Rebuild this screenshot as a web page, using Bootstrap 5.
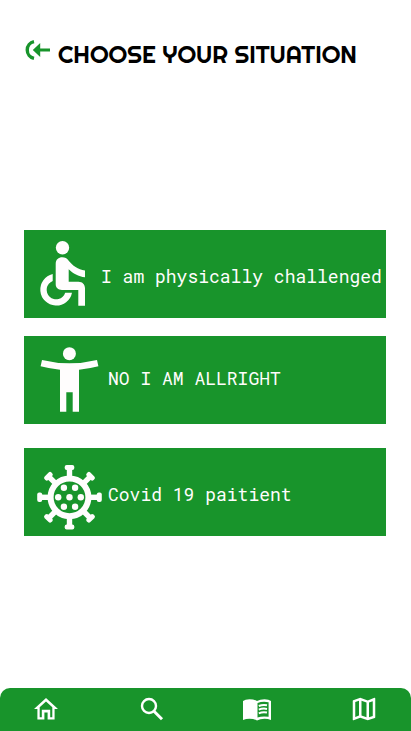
<!DOCTYPE html>
<html lang="en">
<head>
<meta charset="utf-8">
<meta name="viewport" content="width=device-width, initial-scale=1">
<title>Choose your situation</title>
<link href="https://cdn.jsdelivr.net/npm/bootstrap@5.3.0/dist/css/bootstrap.min.css" rel="stylesheet">
<style>
  :root { --brand: #18942b; }
  .back-link { color: var(--brand); margin-bottom: 8px; }
  .page-title { font-family: "Righteous", Lato, sans-serif; font-size: 24px; line-height: 32px; font-weight: 400; }
  .page-head { padding-top: 38px; }
  .choices { padding: 160px 25px 24px 24px; }
  .choice { --bs-btn-color: #fffdfd; --bs-btn-bg: var(--brand); --bs-btn-hover-color: #fff; --bs-btn-hover-bg: #127a22; --bs-btn-active-color: #fff; --bs-btn-active-bg: #106c1e;
    font-family: "Roboto Mono", "Liberation Mono", monospace; font-size: 18px; font-weight: 400; line-height: 24px; min-height: 88px; }
  .choice svg { fill: #fffdfd; }
  .choice-gap { margin-top: 18px; }
  .tabs { background: var(--brand); border-radius: 10px 10px 0 0; height: 43px; padding: 0 32px 2px; }
</style>
<script src="https://cdn.jsdelivr.net/npm/bootstrap@5.3.0/dist/js/bootstrap.bundle.min.js"></script>
</head>
<body class="bg-white">
<div class="d-flex flex-column min-vh-100">
  <header class="page-head d-flex align-items-center px-4 gap-2">
    <a href="#" class="back-link d-flex" aria-label="Back">
      <svg width="26" height="22" viewBox="0 0 26 22"><path d="M10.8 2.600A8.600 8.600 0 0 0 10.8 19.400" fill="none" stroke="currentColor" stroke-width="3.4" transform="translate(-.8 0)"/><path d="M8.800 11l7.400-7v5.500h9.800v3H16.200v5.500z" fill="currentColor"/></svg>
    </a>
    <h1 class="page-title text-black text-nowrap mb-0">CHOOSE YOUR SITUATION</h1>
  </header>

  <main class="choices d-flex flex-column">
    <button type="button" class="choice btn rounded-0 border-0 p-0 d-flex align-items-center text-start text-nowrap">
      <svg class="flex-shrink-0" width="77" height="88" viewBox="0 0 77 88" aria-hidden="true">
        <circle cx="38.5" cy="17.7" r="6.7"/>
        <path d="M31.7 34C31.7 29.5 34.5 27.3 38.3 27.3C41 27.3 43 28.5 44.5 30.5C48.5 35.5 54 39.8 61 40.5V47.3C54.5 46.6 49 43.5 44.7 39.3V51.7H54.5C58.5 51.7 61 54.5 61 58.3V75.7H54.3V60H38C34 60 31.7 57.5 31.7 54.3Z"/>
        <path d="M28.7 44V51A9.5 9.5 0 1 0 41.2 62.7H48A16 16 0 1 1 28.7 44Z"/>
      </svg>
      <span class="pt-1">I am physically challenged</span>
    </button>
    <button type="button" class="choice choice-gap btn rounded-0 border-0 p-0 d-flex align-items-center text-start text-nowrap">
      <svg class="flex-shrink-0" width="84" height="88" viewBox="0 0 84 88" aria-hidden="true">
        <circle cx="45.4" cy="17.7" r="6.5"/>
        <path d="M18 24Q45.4 30.7 73 24L74.4 30.3Q65 32.8 55 33.7V75.7H48.7V56.3H42.3V75.7H36V33.7Q26 32.8 16.6 30.3Z"/>
      </svg>
      <span class="pb-1">NO I AM ALLRIGHT</span>
    </button>
    <button type="button" class="choice btn rounded-0 border-0 p-0 mt-4 d-flex align-items-center text-start text-nowrap">
      <svg class="flex-shrink-0" width="84" height="88" viewBox="0 0 84 88" aria-hidden="true">
        <defs>
          <g id="spike"><rect x="-2.700" y="-29" width="5.400" height="10"/><rect x="-4.800" y="-32.300" width="9.600" height="5" rx="2"/></g>
        </defs>
        <g transform="translate(45.5 49.3)">
          <circle r="18.9" fill="none" stroke="#fffdfd" stroke-width="6"/>
          <use href="#spike"/><use href="#spike" transform="rotate(45)"/><use href="#spike" transform="rotate(90)"/><use href="#spike" transform="rotate(135)"/>
          <use href="#spike" transform="rotate(180)"/><use href="#spike" transform="rotate(225)"/><use href="#spike" transform="rotate(270)"/><use href="#spike" transform="rotate(315)"/>
          <circle r="3.2"/><circle cx="-11.3" r="3.2"/><circle cx="11.3" r="3.2"/>
          <circle cx="-5.6" cy="-9.5" r="3.2"/><circle cx="5.6" cy="-9.5" r="3.2"/>
          <circle cx="-5.6" cy="9.5" r="3.2"/><circle cx="5.6" cy="9.5" r="3.2"/>
        </g>
      </svg>
      <span class="pt-1">Covid 19 paitient</span>
    </button>
  </main>

  <nav class="tabs mt-auto d-flex justify-content-between align-items-center" aria-label="Main">
    <a href="#" class="text-white d-flex" aria-label="Home">
      <svg width="28" height="30" viewBox="0 0 28 30" fill="currentColor"><path fill-rule="evenodd" d="M14 4L26 15H22.6V25.6H15.6V18.4H12.4V25.6H5.4V15H2ZM14 7.4L7.7 13.2V23.2H9.8V15.8H18.2V23.2H20.3V13.2Z"/></svg>
    </a>
    <a href="#" class="text-white d-flex" aria-label="Search">
      <svg width="28" height="30" viewBox="0 0 28 30" fill="none" stroke="currentColor"><circle cx="11" cy="12" r="7" stroke-width="2.4"/><path d="M16 17.200l8 8" stroke-width="3"/></svg>
    </a>
    <a href="#" class="text-white d-flex" aria-label="Guide">
      <svg width="28" height="30" viewBox="0 0 28 30" fill="currentColor"><path fill-rule="evenodd" d="M0 7Q2 5.200 6.500 5.200Q11 5.200 14 7Q17 5.200 21.500 5.200Q26 5.200 28 7V26Q25 24.700 21.500 24.700Q17 24.700 14 26.500Q11 24.700 6.500 24.700Q3 24.700 0 26ZM14.500 9V23.600Q19 21.800 25.600 22.800V8.300Q20 6.800 14.500 9Z"/><path d="M15.800 12Q19.500 10.300 24 11.200M15.800 15.700Q19.500 14 24 14.900M15.800 19.400Q19.500 17.700 24 18.600" fill="none" stroke="currentColor" stroke-width="2"/></svg>
    </a>
    <a href="#" class="text-white d-flex" aria-label="Map">
      <svg width="30" height="30" viewBox="0 0 24 24" fill="currentColor"><path d="M20.500 3l-.16.03L15 5.100 9 3 3.360 4.900c-.21.07-.36.25-.36.48V20.500c0 .28.22.5.5.5l.16-.03L9 18.900l6 2.100 5.640-1.900c.21-.07.36-.25.36-.48V3.500c0-.28-.22-.5-.5-.5zM10 5.470l4 1.400v11.660l-4-1.400V5.470zM5 6.460l3-1.010v11.700l-3 1.160V6.460zM19 17.540l-3 1.010V6.860l3-1.160v11.840z"/></svg>
    </a>
  </nav>
</div>
</body>
</html>
